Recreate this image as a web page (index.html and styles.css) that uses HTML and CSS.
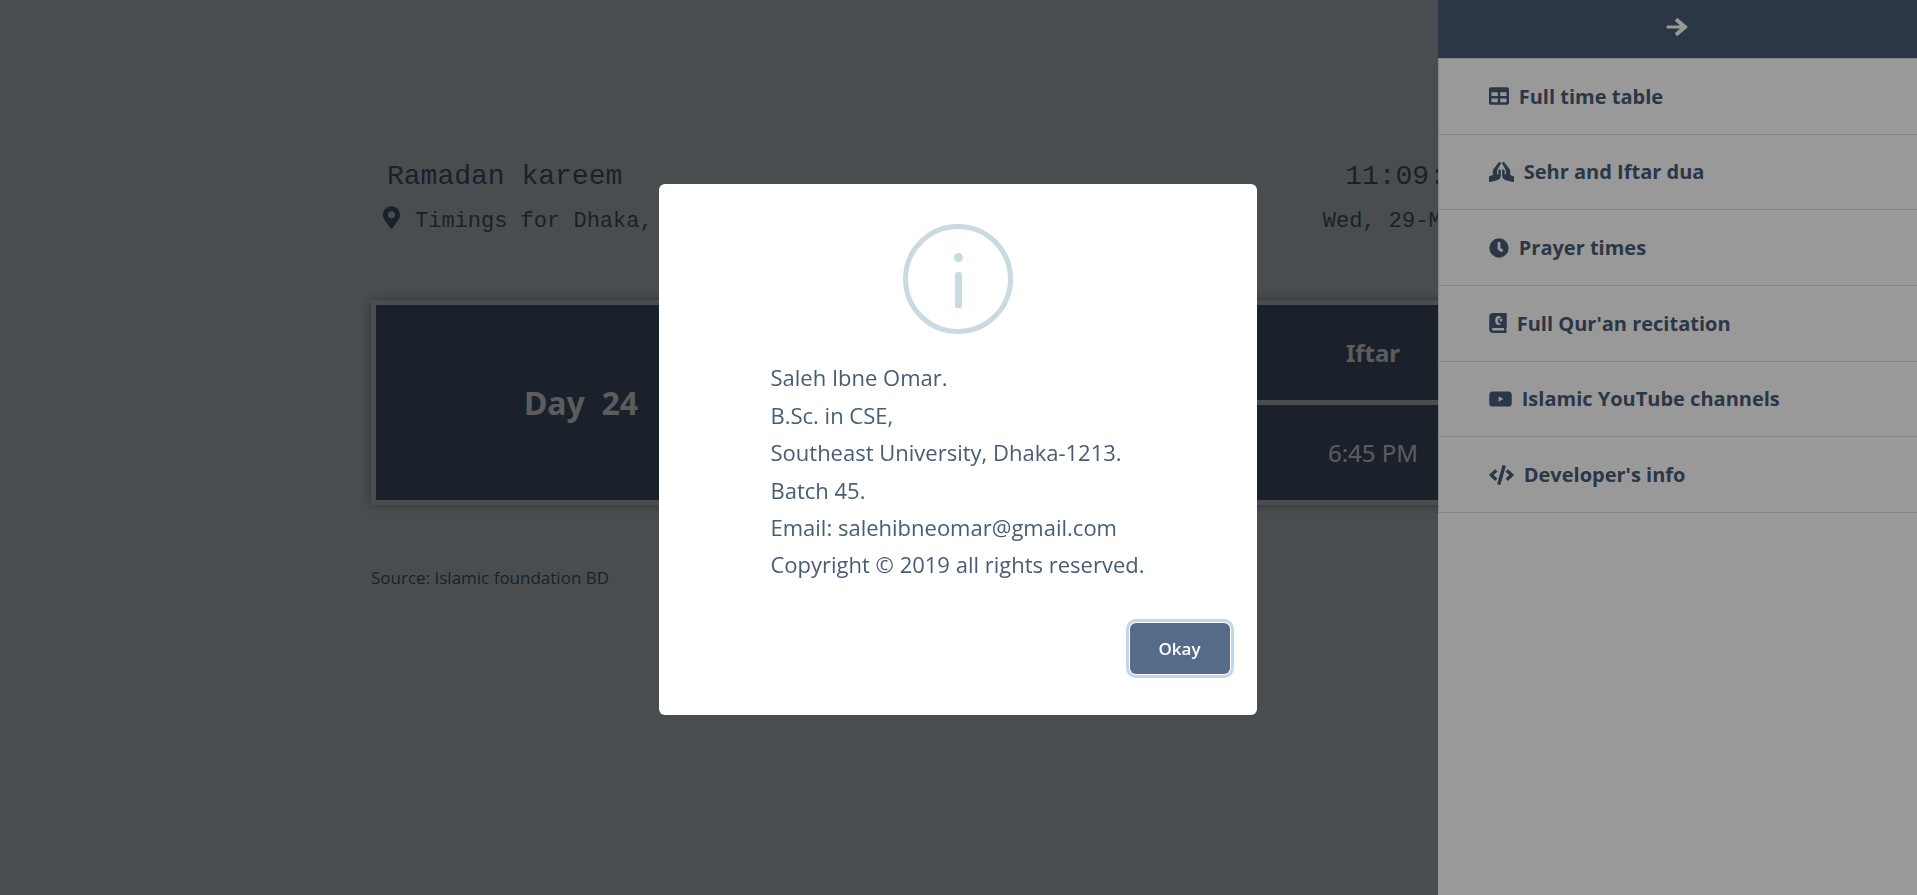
FILE: index.html
```html
<!DOCTYPE html>
<html lang="en">
<head>
<meta charset="utf-8">
<title>Ramadan kareem</title>
<link rel="stylesheet" href="styles.css">
</head>
<body>
<main class="page">
  <header class="top">
    <div class="top-left">
      <h1 class="title">Ramadan kareem</h1>
      <p class="sub place">
        <svg class="pin" viewBox="0 0 384 512" aria-hidden="true"><path d="M172 502C27 291 0 270 0 192 0 86 86 0 192 0s192 86 192 192c0 78-27 99-172 310-10 13-30 13-40 0zm20-230a80 80 0 1 0 0-160 80 80 0 0 0 0 160z"/></svg>
        <span>Timings for Dhaka,</span>
      </p>
    </div>
    <div class="top-right">
      <p class="title">11:09:30 AM</p>
      <p class="sub">Wed, 29-May-2019</p>
    </div>
  </header>
  <table class="times">
    <colgroup><col class="col-day"><col class="col-sehr"><col></colgroup>
    <tr><th class="day" rowspan="2">Day &nbsp;24</th><th></th><th>Iftar</th></tr>
    <tr><td></td><td>6:45 PM</td></tr>
  </table>
  <p class="source">Source: Islamic foundation BD</p>
</main>

<div class="shade"></div>

<aside class="drawer">
  <button class="drawer-close" type="button" aria-label="Close menu">
    <svg class="arrow" viewBox="0 0 448 512" aria-hidden="true"><path d="M190 99l23-23c9-9 25-9 34 0l194 163c9 9 9 25 0 34L247 437c-9 9-25 9-34 0l-23-23c-9-9-9-25 0-34l98-92H24c-13 0-24-11-24-24v-16c0-13 11-24 24-24h264l-98-92c-10-9-10-24 0-33z"/></svg>
  </button>
  <ul class="menu">
    <li><a href="#table"><svg viewBox="0 0 512 512" aria-hidden="true"><path d="M464 32H48C21 32 0 53 0 80v352c0 27 21 48 48 48h416c27 0 48-21 48-48V80c0-27-21-48-48-48zM224 416H64v-96h160zm0-160H64v-96h160zm224 160H288v-96h160zm0-160H288v-96h160z"/></svg>Full time table</a></li>
    <li><a href="#dua"><svg class="wide" viewBox="0 0 640 512" aria-hidden="true"><path d="M272 192c-18 0-32 14-32 32v80c0 9-7 16-16 16s-16-7-16-16v-77c0-17 5-34 14-49l78-130c9-15 5-35-11-44-15-9-34-4-43 11L116 178c-13 21-20 45-20 69v88L22 360c-13 4-22 17-22 31v96c0 16 15 28 31 24l176-46c57-15 97-65 97-121V224c0-18-14-32-32-32zM618 360l-74-25v-88c0-24-7-48-20-69L394 15c-9-15-28-20-43-11-16 9-20 29-11 44l78 130c9 15 14 32 14 49v77c0 9-7 16-16 16s-16-7-16-16v-80c0-18-14-32-32-32s-32 14-32 32v120c0 56 40 106 97 121l176 46c16 4 31-8 31-24v-96c0-14-9-27-22-31z"/></svg>Sehr and Iftar dua</a></li>
    <li><a href="#prayer"><svg viewBox="0 0 512 512" aria-hidden="true"><path d="M256 8a248 248 0 1 0 0 496 248 248 0 0 0 0-496zm57 350l-88-64c-3-2-5-6-5-10V116c0-7 5-12 12-12h48c7 0 12 5 12 12v138l67 48c5 4 6 12 2 17l-28 39c-4 5-14 4-20 0z"/></svg>Prayer times</a></li>
    <li><a href="#quran"><svg class="slim" viewBox="0 0 448 512" aria-hidden="true"><path fill-rule="evenodd" d="M448 358V26c0-15-11-26-26-26H96C43 0 0 43 0 96v320c0 53 43 96 96 96h326c14 0 26-10 26-26v-16c0-8-4-15-10-19-4-16-4-60 0-74 6-5 10-12 10-19zM381 448H96c-42 0-42-64 0-64h285zM302 130l16 32 35 5-25 24 6 35-32-16-31 16 6-35-25-24 35-5zm-72-52c-104 0-104 228 0 228 50 0 75-24 84-40-108 30-130-134-24-147 12-1 22 0 30 1-22-27-54-42-90-42z"/></svg>Full Qur'an recitation</a></li>
    <li><a href="#youtube"><svg class="mid" viewBox="0 0 576 512" aria-hidden="true"><path fill-rule="evenodd" d="M80 64h416c44 0 80 36 80 80v224c0 44-36 80-80 80H80c-44 0-80-36-80-80V144c0-44 36-80 80-80zm160 122v140l120-70z"/></svg>Islamic YouTube channels</a></li>
    <li><a href="#developer"><svg class="wide" viewBox="0 0 640 512" aria-hidden="true"><path d="M279 511l-61-17c-6-2-10-9-8-15L346 9c2-6 9-10 15-8l61 17c6 2 10 9 8 15L294 503c-2 6-9 10-15 8zM165 400l43-47c5-5 4-13-1-17l-91-80 91-80c5-4 6-12 1-17l-43-47c-5-5-12-5-17 0L4 247c-5 5-5 13 0 18l144 135c5 5 13 5 17 0zm327 0l144-135c5-5 5-13 0-18L492 112c-5-5-12-5-17 0l-43 47c-5 5-4 13 1 17l91 80-91 80c-5 4-6 12-1 17l43 47c5 5 12 5 17 0z"/></svg>Developer's info</a></li>
  </ul>
</aside>

<div class="overlay">
  <div class="modal" role="dialog" aria-modal="true" aria-labelledby="info-text">
    <svg class="info" viewBox="0 0 110 110" aria-hidden="true"><circle class="ring" cx="55" cy="55" r="52.5"/><circle cx="55.5" cy="33.5" r="4.5"/><rect x="52" y="48" width="7" height="36" rx="2.5"/></svg>
    <p class="modal-text" id="info-text">Saleh Ibne Omar.<br>B.Sc. in CSE,<br>Southeast University, Dhaka-1213.<br>Batch 45.<br>Email: salehibneomar@gmail.com<br>Copyright © 2019 all rights reserved.</p>
    <div class="modal-footer"><button class="okay" type="button">Okay</button></div>
  </div>
</div>
</body>
</html>
```
FILE: styles.css
```css
* { box-sizing: border-box; }
body {
  margin: 0;
  min-height: 100vh;
  background: #ced6db;
  color: #485c75;
  font-family: "Open Sans", "Noto Sans", sans-serif;
  overflow: hidden;
}
h1, p, ul { margin: 0; padding: 0; }

.page {
  width: 1175px;
  max-width: 100%;
  margin: 0 auto;
  padding-top: 157px;
}
.top {
  display: flex;
  justify-content: space-between;
  padding: 0 12px;
  font-family: "Liberation Mono", monospace;
}
.top-right { text-align: right; }
.title { padding: 0 4px; font-size: 28px; line-height: 40px; font-weight: 400; }
.sub { font-size: 22px; line-height: 32px; margin-top: 9px; }
.place { display: flex; gap: 15px; }
.pin { width: 17px; height: 23px; fill: currentColor; }

.times {
  width: 100%;
  margin-top: 62px;
  border-collapse: separate;
  border-spacing: 5px;
  table-layout: fixed;
  box-shadow: 0 0 10px rgba(72, 92, 117, .6);
  background: #ced6db;
}
.col-day { width: 410px; }
.col-sehr { width: 409px; }
.times th, .times td {
  height: 95px;
  padding: 0;
  background: #485c75;
  color: #fff;
  font-family: "Noto Sans", sans-serif;
  font-size: 24px;
  text-align: center;
}
.times .day { font-size: 32px; }
.source { margin-top: 61px; font-size: 17px; line-height: 24px; }

.shade, .overlay {
  position: fixed;
  inset: 0;
  background: rgba(0, 0, 0, .4);
}

.drawer {
  position: fixed;
  top: 0;
  right: 0;
  bottom: 0;
  width: 25%;
  background: #fff;
}
.drawer-close {
  display: flex;
  justify-content: center;
  width: 100%;
  height: 58px;
  padding: 15px 0 0;
  border: 0;
  background: #485c75;
  color: #fff;
}
.arrow { width: 24px; height: 24px; fill: currentColor; }
.menu {
  display: grid;
  grid-auto-rows: 1fr;
  min-height: 455px;
  list-style: none;
  border: 1px solid #dfdfdf;
  border-width: 1px 0 0 1px;
}
.menu li { border-bottom: 1px solid #dfdfdf; }
.menu a {
  display: flex;
  align-items: center;
  gap: 10px;
  height: 100%;
  padding-left: 50px;
  color: #485c75;
  font-size: 20px;
  font-weight: 700;
  text-decoration: none;
}
.menu svg { width: 20px; height: 20px; fill: currentColor; }
.menu .wide { width: 25px; }
.menu .slim { width: 18px; }
.menu .mid { width: 23px; }

.overlay {
  display: flex;
  align-items: center;
  justify-content: center;
  padding: 4px 2px 0 0;
}
.modal {
  display: flex;
  flex-direction: column;
  align-items: center;
  width: 598px;
  padding: 40px 27px 41px;
  border-radius: 6px;
  background: #fff;
}
.info { width: 110px; height: 110px; fill: #c9dae1; }
.ring { fill: none; stroke: #c9dae1; stroke-width: 5; }
.modal-text {
  margin-top: 25px;
  font-size: 22px;
  line-height: 1.7;
}
.modal-footer {
  display: flex;
  justify-content: flex-end;
  width: 100%;
  margin-top: 39px;
}
.okay {
  width: 100px;
  height: 51px;
  padding: 2px 0 0;
  border: 0;
  border-radius: 6px;
  background: #566b8a;
  color: #fff;
  font: 600 17px/24px "Open Sans", sans-serif;
  box-shadow: 0 0 0 1px #fff, 0 0 0 4px #c2d6e5;
}
```
